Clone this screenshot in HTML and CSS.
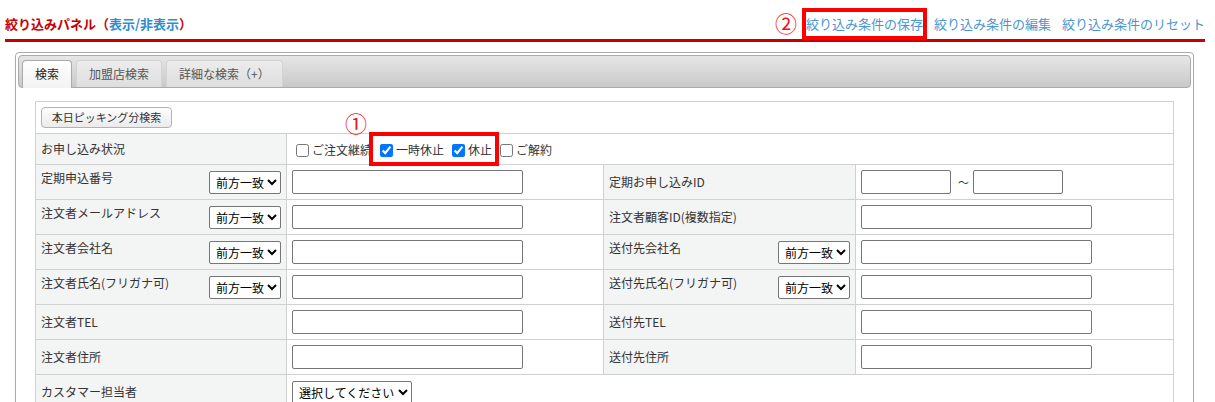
FILE: index.html
```html
<!DOCTYPE html>
<html lang="ja">
<head>
<meta charset="utf-8">
<title>絞り込みパネル</title>
<link rel="stylesheet" href="styles.css">
</head>
<body>
<header class="hdr">
  <h1 class="title">絞り込みパネル（<a class="toggle">表示/非表示</a>）</h1>
  <nav class="links">
    <a class="lnk lnk-mark">絞り込み条件の保存</a>
    <a class="lnk">絞り込み条件の編集</a>
    <a class="lnk">絞り込み条件のリセット</a>
  </nav>
</header>

<div class="panel">
  <ul class="tabs">
    <li class="tab active">検索</li>
    <li class="tab">加盟店検索</li>
    <li class="tab">詳細な検索（+）</li>
  </ul>
  <div class="content">
    <div class="form">
      <div class="cell full"><button class="btn" type="button">本日ピッキング分検索</button></div>

      <div class="cell lbl">お申し込み状況</div>
      <div class="cell val span3 chks"><label class="chk"><input type="checkbox">ご注文継続</label><label class="chk"><input type="checkbox" checked>一時休止</label><label class="chk"><input type="checkbox" checked>休止</label><label class="chk"><input type="checkbox">ご解約</label></div>

      <div class="cell lbl sel"><span class="lt">定期申込番号</span><select class="match"><option>前方一致</option></select></div>
      <div class="cell val"><input class="txt" type="text"></div>
      <div class="cell lbl">定期お申し込みID</div>
      <div class="cell val range"><input class="txt sm" type="text"><span class="tilde">～</span><input class="txt sm" type="text"></div>

      <div class="cell lbl sel"><span class="lt">注文者メールアドレス</span><select class="match"><option>前方一致</option></select></div>
      <div class="cell val"><input class="txt" type="text"></div>
      <div class="cell lbl">注文者顧客ID(複数指定)</div>
      <div class="cell val"><input class="txt" type="text"></div>

      <div class="cell lbl sel"><span class="lt">注文者会社名</span><select class="match"><option>前方一致</option></select></div>
      <div class="cell val"><input class="txt" type="text"></div>
      <div class="cell lbl sel"><span class="lt">送付先会社名</span><select class="match"><option>前方一致</option></select></div>
      <div class="cell val"><input class="txt" type="text"></div>

      <div class="cell lbl sel"><span class="lt">注文者氏名(フリガナ可)</span><select class="match"><option>前方一致</option></select></div>
      <div class="cell val"><input class="txt" type="text"></div>
      <div class="cell lbl sel"><span class="lt">送付先氏名(フリガナ可)</span><select class="match"><option>前方一致</option></select></div>
      <div class="cell val"><input class="txt" type="text"></div>

      <div class="cell lbl">注文者TEL</div>
      <div class="cell val"><input class="txt" type="text"></div>
      <div class="cell lbl">送付先TEL</div>
      <div class="cell val"><input class="txt" type="text"></div>

      <div class="cell lbl">注文者住所</div>
      <div class="cell val"><input class="txt" type="text"></div>
      <div class="cell lbl">送付先住所</div>
      <div class="cell val"><input class="txt" type="text"></div>

      <div class="cell lbl">カスタマー担当者</div>
      <div class="cell val span3"><select class="staff"><option>選択してください</option></select></div>
    </div>
  </div>
</div>

<span class="num num2">②</span>
<div class="mark-box"></div>
<span class="num num1">①</span>
</body>
</html>
```

FILE: styles.css
```css
html, body {
  margin: 0;
  padding: 0;
  background: #fff;
}
body {
  font-family: "Noto Sans CJK JP", "Noto Sans", sans-serif;
  font-size: 12px;
  color: #333;
}

/* header */
.hdr {
  box-sizing: border-box;
  height: 42px;
  margin: 0 10px 0 5px;
  padding-top: 8px;
  border-bottom: 3px solid #c80000;
  display: flex;
  align-items: center;
  justify-content: space-between;
}
.title {
  margin: 0;
  font-size: 13px;
  line-height: 16px;
  font-weight: bold;
  color: #c80000;
}
.toggle {
  color: #2f8ccf;
}
.links {
  display: flex;
  gap: 11px;
}
.lnk {
  display: inline-block;
  font-size: 13px;
  line-height: 24px;
  color: #4b96d2;
}
.lnk-mark {
  outline: 4px solid #ff0000;
}

/* panel */
.panel {
  box-sizing: border-box;
  width: 1179px;
  margin: 10px 0 0 15px;
  padding: 2px 2px 0 2px;
  border: 1px solid #aaa;
  border-radius: 4px;
  height: 400px;
  background: #fff;
}
.tabs {
  box-sizing: border-box;
  height: 33px;
  margin: 0;
  padding: 4px 3px 0 3px;
  list-style: none;
  display: flex;
  align-items: flex-start;
  border: 1px solid #aaa;
  border-radius: 4px;
  background: linear-gradient(#e6e6e6, #c9c9c9);
}
.tab {
  box-sizing: border-box;
  height: 27px;
  padding: 0 12px;
  margin-right: 4px;
  line-height: 25px;
  font-size: 12px;
  color: #555;
  border: 1px solid #d3d3d3;
  border-bottom: 0;
  border-radius: 4px 4px 0 0;
  background: linear-gradient(#ececec, #dedede);
}
.tab.active {
  height: 28px;
  color: #222;
  border-color: #aaa;
  background: linear-gradient(#ffffff, #f2f2f2);
}
.content {
  padding: 13px 0 0 17px;
}

/* form grid */
.form {
  display: grid;
  width: max-content;
  grid-template-columns: 250px 316px 251px 317px;
  grid-template-rows: 31px 30px repeat(7, 34px);
  gap: 1px;
  background: #d0d0d0;
  border: 1px solid #d0d0d0;
}
.cell {
  background: #fff;
  display: flex;
  align-items: center;
  padding: 0 5px;
  line-height: 16px;
}
.full {
  grid-column: 1 / -1;
  align-items: flex-start;
  padding: 5px;
}
.span3 {
  grid-column: span 3;
}
.lbl {
  background: #f3f4f4;
  color: #333;
}
.lbl.sel {
  justify-content: space-between;
}
.lbl.sel .lt {
  align-self: flex-start;
  margin-top: 5px;
}

.btn {
  box-sizing: border-box;
  width: 131px;
  height: 21px;
  padding: 0;
  font-family: inherit;
  font-size: 11px;
  line-height: 19px;
  color: #333;
  border: 1px solid #b3afbd;
  border-radius: 4px;
  background: linear-gradient(#fdfdfd, #ebebeb);
}

.chks {
  padding-top: 2px;
}
.chk {
  display: inline-flex;
  align-items: center;
  margin-right: 4px;
  font-size: 12px;
}
.chk input {
  width: 13px;
  height: 13px;
  margin: 0 3px 0 4px;
}

.txt {
  box-sizing: border-box;
  width: 231px;
  height: 24px;
  margin: 0;
  border: 1px solid #767676;
  border-radius: 2px;
  background: #fff;
}
.txt.sm {
  width: 90px;
}
.tilde {
  margin: 0 4px 0 7px;
  font-size: 11px;
  color: #333;
}

.match, .staff {
  box-sizing: border-box;
  height: 23px;
  margin: 0;
  padding: 0 0 0 2px;
  font-family: inherit;
  font-size: 12px;
  color: #000;
  border: 1px solid #767676;
  border-radius: 2px;
  background-color: #fff;
}
.match {
  width: 72px;
}
.staff {
  width: 120px;
}

/* annotations */
.num {
  position: absolute;
  font-size: 22px;
  line-height: 22px;
  color: #f01818;
}
.num1 {
  left: 345px;
  top: 111px;
}
.num2 {
  left: 775px;
  top: 11px;
}
.mark-box {
  position: absolute;
  left: 369px;
  top: 132px;
  width: 130px;
  height: 34px;
  box-sizing: border-box;
  border: 4px solid #ff0000;
}
```
